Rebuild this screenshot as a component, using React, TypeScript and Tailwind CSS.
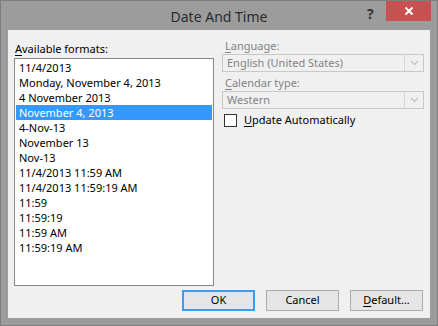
import React from "react";

const formats = [
  "11/4/2013",
  "Monday, November 4, 2013",
  "4 November 2013",
  "November 4, 2013",
  "4-Nov-13",
  "November 13",
  "Nov-13",
  "11/4/2013 11:59 AM",
  "11/4/2013 11:59:19 AM",
  "11:59",
  "11:59:19",
  "11:59 AM",
  "11:59:19 AM",
];

const font = { fontFamily: '"Noto Sans", "Open Sans", sans-serif' };

function Chevron() {
  return (
    <svg width="9" height="6" viewBox="0 0 9 6" className="text-[#c4c4c4]">
      <path d="M1 1l3.5 3.5L8 1" fill="none" stroke="currentColor" strokeWidth="1.4" />
    </svg>
  );
}

function Combo({ value }: { value: string }) {
  return (
    <div className="flex h-[18px] border border-[#c8c8c8] bg-[#f0f0f0]">
      <div className="flex-1 pl-[4px] text-[11px] leading-[16px] text-[#838383]">{value}</div>
      <div className="flex w-[19px] items-center justify-center border-l border-[#d6d6d6]">
        <Chevron />
      </div>
    </div>
  );
}

function Btn({ children, primary }: { children: React.ReactNode; primary?: boolean }) {
  return (
    <div
      className={
        "flex h-[21px] w-[73px] items-center justify-center bg-[#e5e5e5] text-[11px] text-black " +
        (primary ? "border border-[#3c9cf0] shadow-[inset_0_0_0_1px_#3c9cf0]" : "border border-[#acacac]")
      }
    >
      {children}
    </div>
  );
}

export default function App() {
  return (
    <div
      className="flex h-[326px] w-[438px] flex-col border border-[#7d7d7d] bg-[#9c9c9c]"
      style={font}
    >
      {/* title bar */}
      <div className="relative flex h-[29px] items-center justify-center pt-[1px]">
        <span className="text-[14px] text-[#2b2b2b]">Date And Time</span>
        <span className="absolute left-[366px] top-[4px] text-[14px] font-bold leading-[18px] text-[#333]">?</span>
        <div className="absolute left-[385px] top-0 flex h-[20px] w-[45px] items-center justify-center bg-[#c75050]">
          <svg width="10" height="10" viewBox="0 0 10 10">
            <path d="M1.5 1.5l7 7M8.5 1.5l-7 7" stroke="white" strokeWidth="2" />
          </svg>
        </div>
      </div>

      {/* client */}
      <div className="ml-[7px] flex h-[288px] w-[422px] flex-col bg-[#f0f0f0]">
        <div className="flex">
          <div className="ml-[6px] w-[200px] pt-[11px]">
            <div className="h-[17px] pl-[1px] text-[11px] leading-[15px] text-black">
              <span className="underline underline-offset-2">A</span>vailable formats:
            </div>
            <div className="h-[228px] border border-[#828790] bg-white p-[1px]">
              {formats.map((f, i) => (
                <div
                  key={f}
                  className={
                    "h-[15px] pl-[3px] text-[11px] leading-[15px] " +
                    (i === 3 ? "bg-[#3399ff] text-white" : "text-black")
                  }
                >
                  {f}
                </div>
              ))}
            </div>
          </div>

          <div className="ml-[8px] w-[202px]">
            <div className="mt-[8px] h-[16px] pl-[3px] text-[11px] leading-[16px] text-[#838383]">
              <span className="underline underline-offset-2">L</span>anguage:
            </div>
            <Combo value="English (United States)" />
            <div className="h-[19px] pl-[3px] pt-[3px] text-[11px] leading-[16px] text-[#838383]">
              <span className="underline underline-offset-2">C</span>alendar type:
            </div>
            <Combo value="Western" />
            <div className="mt-[4px] flex items-center pl-[2px]">
              <div className="h-[13px] w-[13px] border border-[#333] bg-white" />
              <span className="ml-[7px] text-[11px] leading-[14px] text-black">
                <span className="underline underline-offset-2">U</span>pdate Automatically
              </span>
            </div>
          </div>
        </div>

        <div className="mt-auto flex justify-end gap-[11px] pb-[7px] pr-[7px]">
          <Btn primary>OK</Btn>
          <Btn>Cancel</Btn>
          <Btn>
            <span>
              <span className="underline underline-offset-2">D</span>efault...
            </span>
          </Btn>
        </div>
      </div>
    </div>
  );
}
